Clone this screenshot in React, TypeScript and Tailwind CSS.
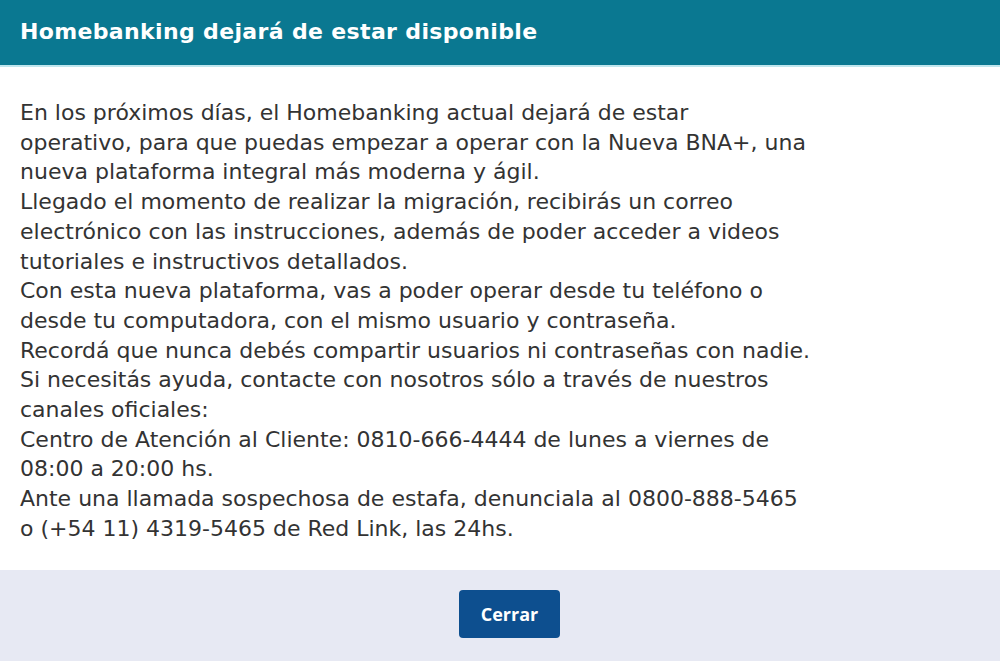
const lines = [
  "En los próximos días, el Homebanking actual dejará de estar",
  "operativo, para que puedas empezar a operar con la Nueva BNA+, una",
  "nueva plataforma integral más moderna y ágil.",
  "Llegado el momento de realizar la migración, recibirás un correo",
  "electrónico con las instrucciones, además de poder acceder a videos",
  "tutoriales e instructivos detallados.",
  "Con esta nueva plataforma, vas a poder operar desde tu teléfono o",
  "desde tu computadora, con el mismo usuario y contraseña.",
  "Recordá que nunca debés compartir usuarios ni contraseñas con nadie.",
  "Si necesitás ayuda, contacte con nosotros sólo a través de nuestros",
  "canales oficiales:",
  "Centro de Atención al Cliente: 0810-666-4444 de lunes a viernes de",
  "08:00 a 20:00 hs.",
  "Ante una llamada sospechosa de estafa, denunciala al 0800-888-5465",
  "o (+54 11) 4319-5465 de Red Link, las 24hs.",
];

export default function App() {
  return (
    <div className="w-[1000px] h-[661px] bg-white flex flex-col font-['DejaVu_Sans',sans-serif]">
      <div className="h-[67px] shrink-0 bg-[#0a7891] border-b-2 border-[#bfe6ee] flex items-center px-5 pb-[3px]">
        <h1 className="text-white font-bold text-[22px] tracking-[0.35px]">
          Homebanking dejará de estar disponible
        </h1>
      </div>

      <div className="flex-1 px-5 pt-[31px] text-[#333333] text-[22px] leading-[29.7px]">
        {lines.map((l, i) => (
          <div key={i} className="whitespace-nowrap">
            {l}
          </div>
        ))}
      </div>

      <div className="h-[91px] shrink-0 bg-[#e7e9f3] flex justify-center pt-5 pl-[19px]">
        <button className="w-[101px] h-[48px] rounded-[4px] bg-[#0d4f8f] text-white font-bold text-[18px] font-['Open_Sans',sans-serif]">
          Cerrar
        </button>
      </div>
    </div>
  );
}
